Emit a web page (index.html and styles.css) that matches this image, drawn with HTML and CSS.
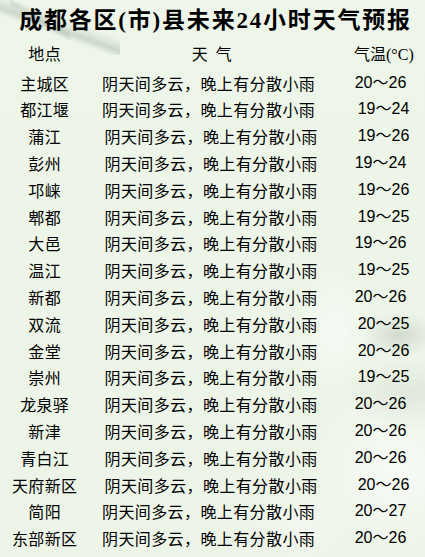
FILE: index.html
```html
<!DOCTYPE html>
<html lang="zh-CN">
<head>
<meta charset="utf-8">
<title>成都各区(市)县未来24小时天气预报</title>
<link rel="stylesheet" href="styles.css">
</head>
<body>
<div class="board">
  <h1 class="title">成都各区(市)县未来24小时天气预报</h1>
  <div class="table">
    <div class="row head">
      <span class="place">地点</span>
      <span class="wx">天气</span>
      <span class="temp">气温<span class="unit">(°C)</span></span>
    </div>
    <div class="row"><span class="place">主城区</span><span class="wx">阴天间多云，晚上有分散小雨</span><span class="temp">20～26</span></div>
    <div class="row"><span class="place">都江堰</span><span class="wx">阴天间多云，晚上有分散小雨</span><span class="temp sh">19～24</span></div>
    <div class="row"><span class="place">蒲江</span><span class="wx sh">阴天间多云，晚上有分散小雨</span><span class="temp sh">19～26</span></div>
    <div class="row"><span class="place">彭州</span><span class="wx sh">阴天间多云，晚上有分散小雨</span><span class="temp">19～24</span></div>
    <div class="row"><span class="place">邛崃</span><span class="wx sh">阴天间多云，晚上有分散小雨</span><span class="temp sh">19～26</span></div>
    <div class="row"><span class="place">郫都</span><span class="wx sh">阴天间多云，晚上有分散小雨</span><span class="temp sh">19～25</span></div>
    <div class="row"><span class="place">大邑</span><span class="wx sh">阴天间多云，晚上有分散小雨</span><span class="temp">19～26</span></div>
    <div class="row"><span class="place">温江</span><span class="wx sh">阴天间多云，晚上有分散小雨</span><span class="temp sh">19～25</span></div>
    <div class="row"><span class="place">新都</span><span class="wx sh">阴天间多云，晚上有分散小雨</span><span class="temp">20～26</span></div>
    <div class="row"><span class="place">双流</span><span class="wx sh">阴天间多云，晚上有分散小雨</span><span class="temp sh">20～25</span></div>
    <div class="row"><span class="place">金堂</span><span class="wx sh">阴天间多云，晚上有分散小雨</span><span class="temp sh">20～26</span></div>
    <div class="row"><span class="place">崇州</span><span class="wx sh">阴天间多云，晚上有分散小雨</span><span class="temp sh">19～25</span></div>
    <div class="row"><span class="place">龙泉驿</span><span class="wx sh">阴天间多云，晚上有分散小雨</span><span class="temp">20～26</span></div>
    <div class="row"><span class="place">新津</span><span class="wx sh">阴天间多云，晚上有分散小雨</span><span class="temp">20～26</span></div>
    <div class="row"><span class="place">青白江</span><span class="wx sh">阴天间多云，晚上有分散小雨</span><span class="temp">20～26</span></div>
    <div class="row"><span class="place">天府新区</span><span class="wx sh">阴天间多云，晚上有分散小雨</span><span class="temp sh">20～26</span></div>
    <div class="row"><span class="place">简阳</span><span class="wx">阴天间多云，晚上有分散小雨</span><span class="temp">20～27</span></div>
    <div class="row"><span class="place">东部新区</span><span class="wx">阴天间多云，晚上有分散小雨</span><span class="temp">20～26</span></div>
  </div>
</div>
</body>
</html>
```

FILE: styles.css
```css
html, body {
  margin: 0;
  padding: 0;
}

body {
  width: 425px;
  height: 557px;
  overflow: hidden;
  background: #edf5e8;
}

.board {
  width: 425px;
  height: 557px;
  box-sizing: border-box;
  color: #000;
  font-family: "Noto Sans CJK SC", sans-serif;
  background:
    linear-gradient(20deg, transparent 0 40%, rgba(140, 160, 140, 0.35) 48%, rgba(160, 175, 160, 0.2) 54%, transparent 62%) 0 0 / 120px 55px no-repeat,
    linear-gradient(30deg, transparent 0 44%, rgba(150, 170, 150, 0.25) 50%, transparent 58%) 10px 0 / 60px 40px no-repeat,
    radial-gradient(ellipse 60px 90px at 335px 330px, rgba(255, 255, 255, 0.55), transparent 70%),
    radial-gradient(ellipse 50px 30px at 400px 335px, rgba(150, 160, 150, 0.3), transparent 75%),
    radial-gradient(ellipse 120px 110px at 395px 470px, rgba(255, 255, 255, 0.6), transparent 75%),
    radial-gradient(ellipse 70px 60px at 300px 520px, rgba(255, 255, 255, 0.35), transparent 75%),
    radial-gradient(ellipse 90px 50px at 410px 395px, rgba(200, 205, 195, 0.35), transparent 75%),
    linear-gradient(180deg, #eef6ea 0%, #ecf5e7 60%, #edf4e8 100%);
}

.title {
  margin: 0;
  padding: 6px 0 0 6px;
  height: 36px;
  box-sizing: border-box;
  line-height: 30px;
  text-align: center;
  font-family: "Liberation Serif", "Noto Sans CJK SC", serif;
  font-size: 23px;
  font-weight: bold;
  letter-spacing: 1.8px;
  white-space: nowrap;
}

.table {
  display: flex;
  flex-direction: column;
}

.row {
  display: grid;
  grid-template-columns: 89px 265.7px 1fr;
  height: 26.8px;
  line-height: 26.8px;
  font-size: 16px;
  white-space: nowrap;
}

.row.head {
  height: 33.6px;
  padding-top: 2px;
  box-sizing: border-box;
  line-height: 31.6px;
}

.place {
  text-align: center;
  letter-spacing: 0.3px;
  padding-left: 0.3px;
}

.wx {
  padding-left: 13px;
  letter-spacing: 0.4px;
}

.wx.sh {
  padding-left: 15.5px;
}

.head .wx {
  padding-left: 102.7px;
  letter-spacing: 8px;
}

.temp {
  font-family: "Liberation Sans", "Noto Sans CJK SC", sans-serif;
}

.temp.sh {
  padding-left: 3px;
}

.head .temp {
  font-family: "Noto Sans CJK SC", sans-serif;
  padding-left: 0;
  margin-left: -0.7px;
}

.unit {
  font-family: "Liberation Serif", serif;
  font-size: 16px;
}
```
